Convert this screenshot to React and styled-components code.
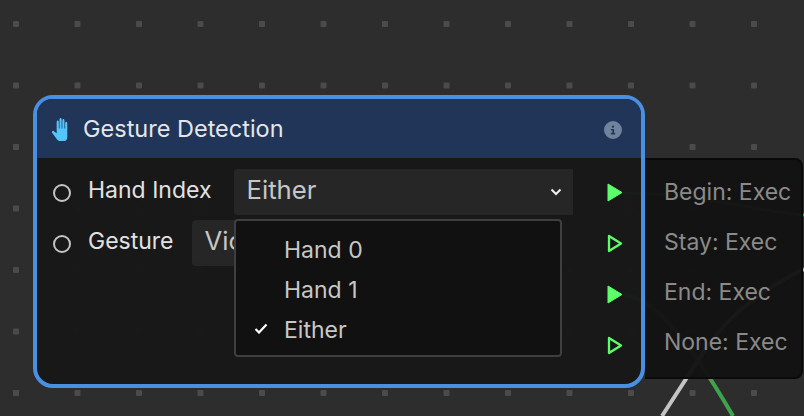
import React from "react";
import styled, { createGlobalStyle } from "styled-components";
import { FaCircleInfo } from "react-icons/fa6";

const Global = createGlobalStyle`
  html, body { margin: 0; padding: 0; background: #2d2d2d; }
  body { width: 804px; height: 416px; overflow: hidden; font-family: Inter, "Liberation Sans", sans-serif; }
`;

const Canvas = styled.div`
  position: relative;
  width: 804px;
  height: 416px;
  overflow: hidden;
  background-color: #2d2d2d;
`;

const Dots = styled.svg`
  position: absolute;
  inset: 0;
`;

const Wires = styled.svg`
  position: absolute;
  inset: 0;
`;

const Node = styled.div`
  position: absolute;
  left: 33px;
  top: 95px;
  width: 612px;
  height: 293px;
  box-sizing: border-box;
  border: 4px solid #4a90e2;
  border-radius: 20px;
  background: rgba(24, 24, 24, 0.97);
  display: flex;
  flex-direction: column;
`;

const Header = styled.div`
  height: 59px;
  flex: none;
  box-sizing: border-box;
  background: #203557;
  border-radius: 15px 15px 0 0;
  display: flex;
  align-items: center;
  padding: 2px 19px 0 14px;
  color: #e4e6ea;
`;

const HandIcon = styled.svg`
  width: 17px;
  height: 23px;
  flex: none;
`;

const Title = styled.div`
  margin: 0 0 2px 15px;
  font-size: 23.5px;
  font-weight: 400;
  flex: 1;
`;

const Info = styled(FaCircleInfo)`
  width: 18px;
  height: 18px;
  color: #6f829e;
`;

const Body = styled.div`
  position: relative;
  flex: 1;
  display: flex;
  justify-content: space-between;
  padding: 11px 18px 0 16px;
`;

const Inputs = styled.div`
  display: flex;
  flex-direction: column;
  gap: 5px;
`;

const Row = styled.div`
  display: flex;
  align-items: center;
  height: 46px;
`;

const Socket = styled.div`
  width: 18px;
  height: 18px;
  box-sizing: border-box;
  border: 2px solid #c4c4c4;
  border-radius: 50%;
  flex: none;
  margin-top: 1px;
`;

const Label = styled.div`
  margin: 0 0 4px 17px;
  width: ${(p) => p.$w}px;
  font-size: 23px;
  color: #e2e2e2;
  flex: none;
`;

const Select = styled.div`
  width: ${(p) => p.$w}px;
  height: 46px;
  box-sizing: border-box;
  border-radius: 4px 0 0 4px;
  background: #262626;
  padding: 0 11px 6px 12.5px;
  display: flex;
  align-items: center;
  justify-content: space-between;
  font-size: 25.7px;
  color: #c6c6c6;
  white-space: nowrap;
  overflow: hidden;
`;

const Chevron = styled.svg`
  width: 12px;
  height: 8px;
  margin-top: 6px;
`;

const Pins = styled.div`
  display: flex;
  flex-direction: column;
  gap: 32px;
  padding-top: 14px;
`;

const Pin = styled.svg`
  width: 16px;
  height: 19px;
  display: block;
`;

const Menu = styled.div`
  position: absolute;
  left: 197px;
  top: 61px;
  width: 328px;
  height: 138px;
  box-sizing: border-box;
  border: 2px solid #3f3f3f;
  border-radius: 4px;
  background: #111111;
  padding: 9px 0;
`;

const Item = styled.div`
  position: relative;
  height: 40px;
  line-height: 40px;
  padding-left: 48px;
  font-size: 23px;
  color: #c8c8c8;
`;

const Check = styled.svg`
  position: absolute;
  left: 18px;
  top: 13px;
  width: 14px;
  height: 11px;
`;

const Outputs = styled.div`
  position: absolute;
  left: 645px;
  top: 158px;
  width: 158px;
  height: 221px;
  box-sizing: border-box;
  border: 2px solid #0a0a0a;
  border-left: none;
  border-radius: 0 8px 8px 0;
  background: rgba(19, 19, 19, 0.97);
  display: flex;
  flex-direction: column;
  gap: 10px;
  padding: 12px 0 0 19px;
`;

const OutLabel = styled.div`
  height: 40px;
  line-height: 40px;
  font-size: 23px;
  color: #8a8a8a;
  white-space: nowrap;
`;

const PinIcon = ({ filled }) => (
  <Pin viewBox="0 0 16 19">
    <path
      d={filled ? "M1 1 L15 9.5 L1 18 Z" : "M2 2 L14 9.5 L2 17 Z"}
      fill={filled ? "#5cff6a" : "none"}
      stroke="#5cff6a"
      strokeWidth={filled ? 1 : 2.3}
      strokeLinejoin="round"
    />
  </Pin>
);

const xs = [16, 77.5, 139, 200.5, 262, 323.5, 385, 446.5, 508, 569.5, 631, 692.5, 754];
const ys = [24, 85.5, 147, 208.5, 270, 331.5, 393];

export default function App() {
  return (
    <Canvas>
      <Global />
      <Dots width="804" height="416">
        {xs.map((x) =>
          ys.map((y) => <rect key={`${x}-${y}`} x={x - 3} y={y - 3} width="6" height="6" rx="1" fill="#4b4b4b" />)
        )}
      </Dots>
      <Wires width="804" height="416">
        <path d="M622 193 C 700 193, 760 212, 804 215" stroke="#3fa34d" strokeWidth="3" fill="none" />
        <path d="M622 294 C 650 298, 680 325, 733 416" stroke="#3fa34d" strokeWidth="4" fill="none" />
        <path d="M662 416 L 697 362 C 720 325, 750 295, 804 269" stroke="#c4c4c4" strokeWidth="4" fill="none" />
      </Wires>
      <Outputs>
        <OutLabel>Begin: Exec</OutLabel>
        <OutLabel>Stay: Exec</OutLabel>
        <OutLabel>End: Exec</OutLabel>
        <OutLabel>None: Exec</OutLabel>
      </Outputs>
      <Node>
        <Header>
          <HandIcon viewBox="0 0 24 24" preserveAspectRatio="none">
            <path
              fill="#55c5fb"
              d="M23 5.5V20c0 2.2-1.8 4-4 4h-7.3c-1.08 0-2.1-.43-2.85-1.19L1 14.83s1.26-1.23 1.3-1.25c.22-.19.49-.29.79-.29.22 0 .42.06.6.16.04.01 4.31 2.46 4.31 2.46V4c0-.83.67-1.5 1.5-1.5S11 3.17 11 4v7h1V1.5c0-.83.67-1.5 1.5-1.5S15 .67 15 1.5V11h1V2.5c0-.83.67-1.5 1.5-1.5s1.5.67 1.5 1.5V11h1V5.5c0-.83.67-1.5 1.5-1.5s1.5.67 1.5 1.5z"
            />
          </HandIcon>
          <Title>Gesture Detection</Title>
          <Info />
        </Header>
        <Body>
          <Inputs>
            <Row>
              <Socket />
              <Label $w={146}>Hand Index</Label>
              <Select $w={339}>
                Either
                <Chevron viewBox="0 0 12 8">
                  <path d="M1.5 1.5 L6 6 L10.5 1.5" stroke="#f0f0f0" strokeWidth="2" fill="none" />
                </Chevron>
              </Select>
            </Row>
            <Row>
              <Socket />
              <Label $w={104}>Gesture</Label>
              <Select $w={200}>Victory</Select>
            </Row>
          </Inputs>
          <Pins>
            <PinIcon filled />
            <PinIcon />
            <PinIcon filled />
            <PinIcon />
          </Pins>
          <Menu>
            <Item>Hand 0</Item>
            <Item>Hand 1</Item>
            <Item>
              <Check viewBox="0 0 14 11">
                <path d="M1.5 6 L5 9.5 L12.5 1.5" stroke="#fff" strokeWidth="2.2" fill="none" />
              </Check>
              Either
            </Item>
          </Menu>
        </Body>
      </Node>
    </Canvas>
  );
}
